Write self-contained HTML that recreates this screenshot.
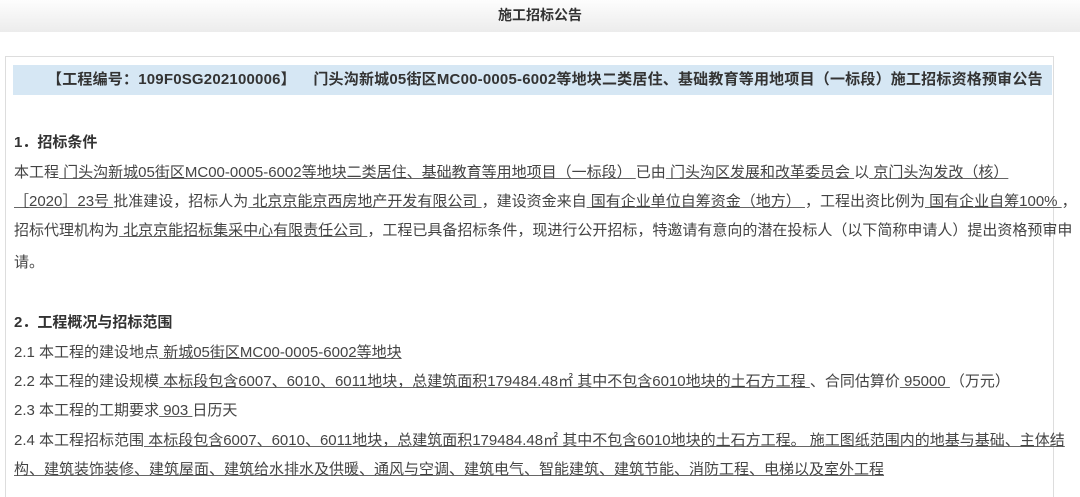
<!DOCTYPE html>
<html><head><meta charset="utf-8"><style>
body{margin:0;width:1080px;height:481px;overflow:hidden;background:#fff;font-family:"Liberation Sans","Noto Sans CJK SC",sans-serif;color:#444;}
.hd{position:absolute;left:0;top:0;width:1080px;height:32px;background:linear-gradient(#fdfdfd,#ececec);text-align:center;font-size:14px;font-weight:bold;line-height:30px;color:#333}
.box{position:absolute;left:5px;top:56px;width:1047px;height:440px;border:1px solid #ddd;border-bottom:none}
.band{position:absolute;left:13px;top:65px;width:1039px;height:30px;background:#d6e7f4;font-weight:bold;font-size:15px;letter-spacing:0.2px;line-height:30px;color:#333;white-space:nowrap}
.l{position:absolute;left:14px;font-size:15px;white-space:nowrap;line-height:20px}
.b{font-weight:bold;color:#333}
u{text-decoration:underline;text-decoration-color:#666}
</style></head><body>
<div class="hd">施工招标公告</div>
<div class="box"></div>
<div class="band"><span style="position:absolute;left:34px">【工程编号：109F0SG202100006】&nbsp;&nbsp;&nbsp;&nbsp;门头沟新城05街区MC00-0005-6002等地块二类居住、基础教育等用地项目（一标段）施工招标资格预审公告</span></div>
<div class="l b" style="top:133px">1．招标条件</div>
<div class="l" style="top:163px">本工程<u> 门头沟新城05街区MC00-0005-6002等地块二类居住、基础教育等用地项目（一标段） </u>已由<u> 门头沟区发展和改革委员会 </u>以<u> 京门头沟发改（核）</u></div>
<div class="l" style="top:192px"><u>［2020］23号 </u>批准建设，招标人为<u> 北京京能京西房地产开发有限公司 </u>，建设资金来自<u> 国有企业单位自筹资金（地方） </u>，工程出资比例为<u> 国有企业自筹100% </u>，</div>
<div class="l" style="top:221px">招标代理机构为<u> 北京京能招标集采中心有限责任公司 </u>，工程已具备招标条件，现进行公开招标，特邀请有意向的潜在投标人（以下简称申请人）提出资格预审申</div>
<div class="l" style="top:253px">请。</div>
<div class="l b" style="top:313px">2．工程概况与招标范围</div>
<div class="l" style="top:343px">2.1 本工程的建设地点<u> 新城05街区MC00-0005-6002等地块 </u></div>
<div class="l" style="top:372px">2.2 本工程的建设规模<u> 本标段包含6007、6010、6011地块，总建筑面积179484.48㎡ 其中不包含6010地块的土石方工程 </u>、合同估算价<u> 95000 </u>（万元）</div>
<div class="l" style="top:401px">2.3 本工程的工期要求<u> 903 </u>日历天</div>
<div class="l" style="top:431px">2.4 本工程招标范围<u> 本标段包含6007、6010、6011地块，总建筑面积179484.48㎡ 其中不包含6010地块的土石方工程。 施工图纸范围内的地基与基础、主体结</u></div>
<div class="l" style="top:460px"><u>构、建筑装饰装修、建筑屋面、建筑给水排水及供暖、通风与空调、建筑电气、智能建筑、建筑节能、消防工程、电梯以及室外工程 </u></div>
</body></html>
